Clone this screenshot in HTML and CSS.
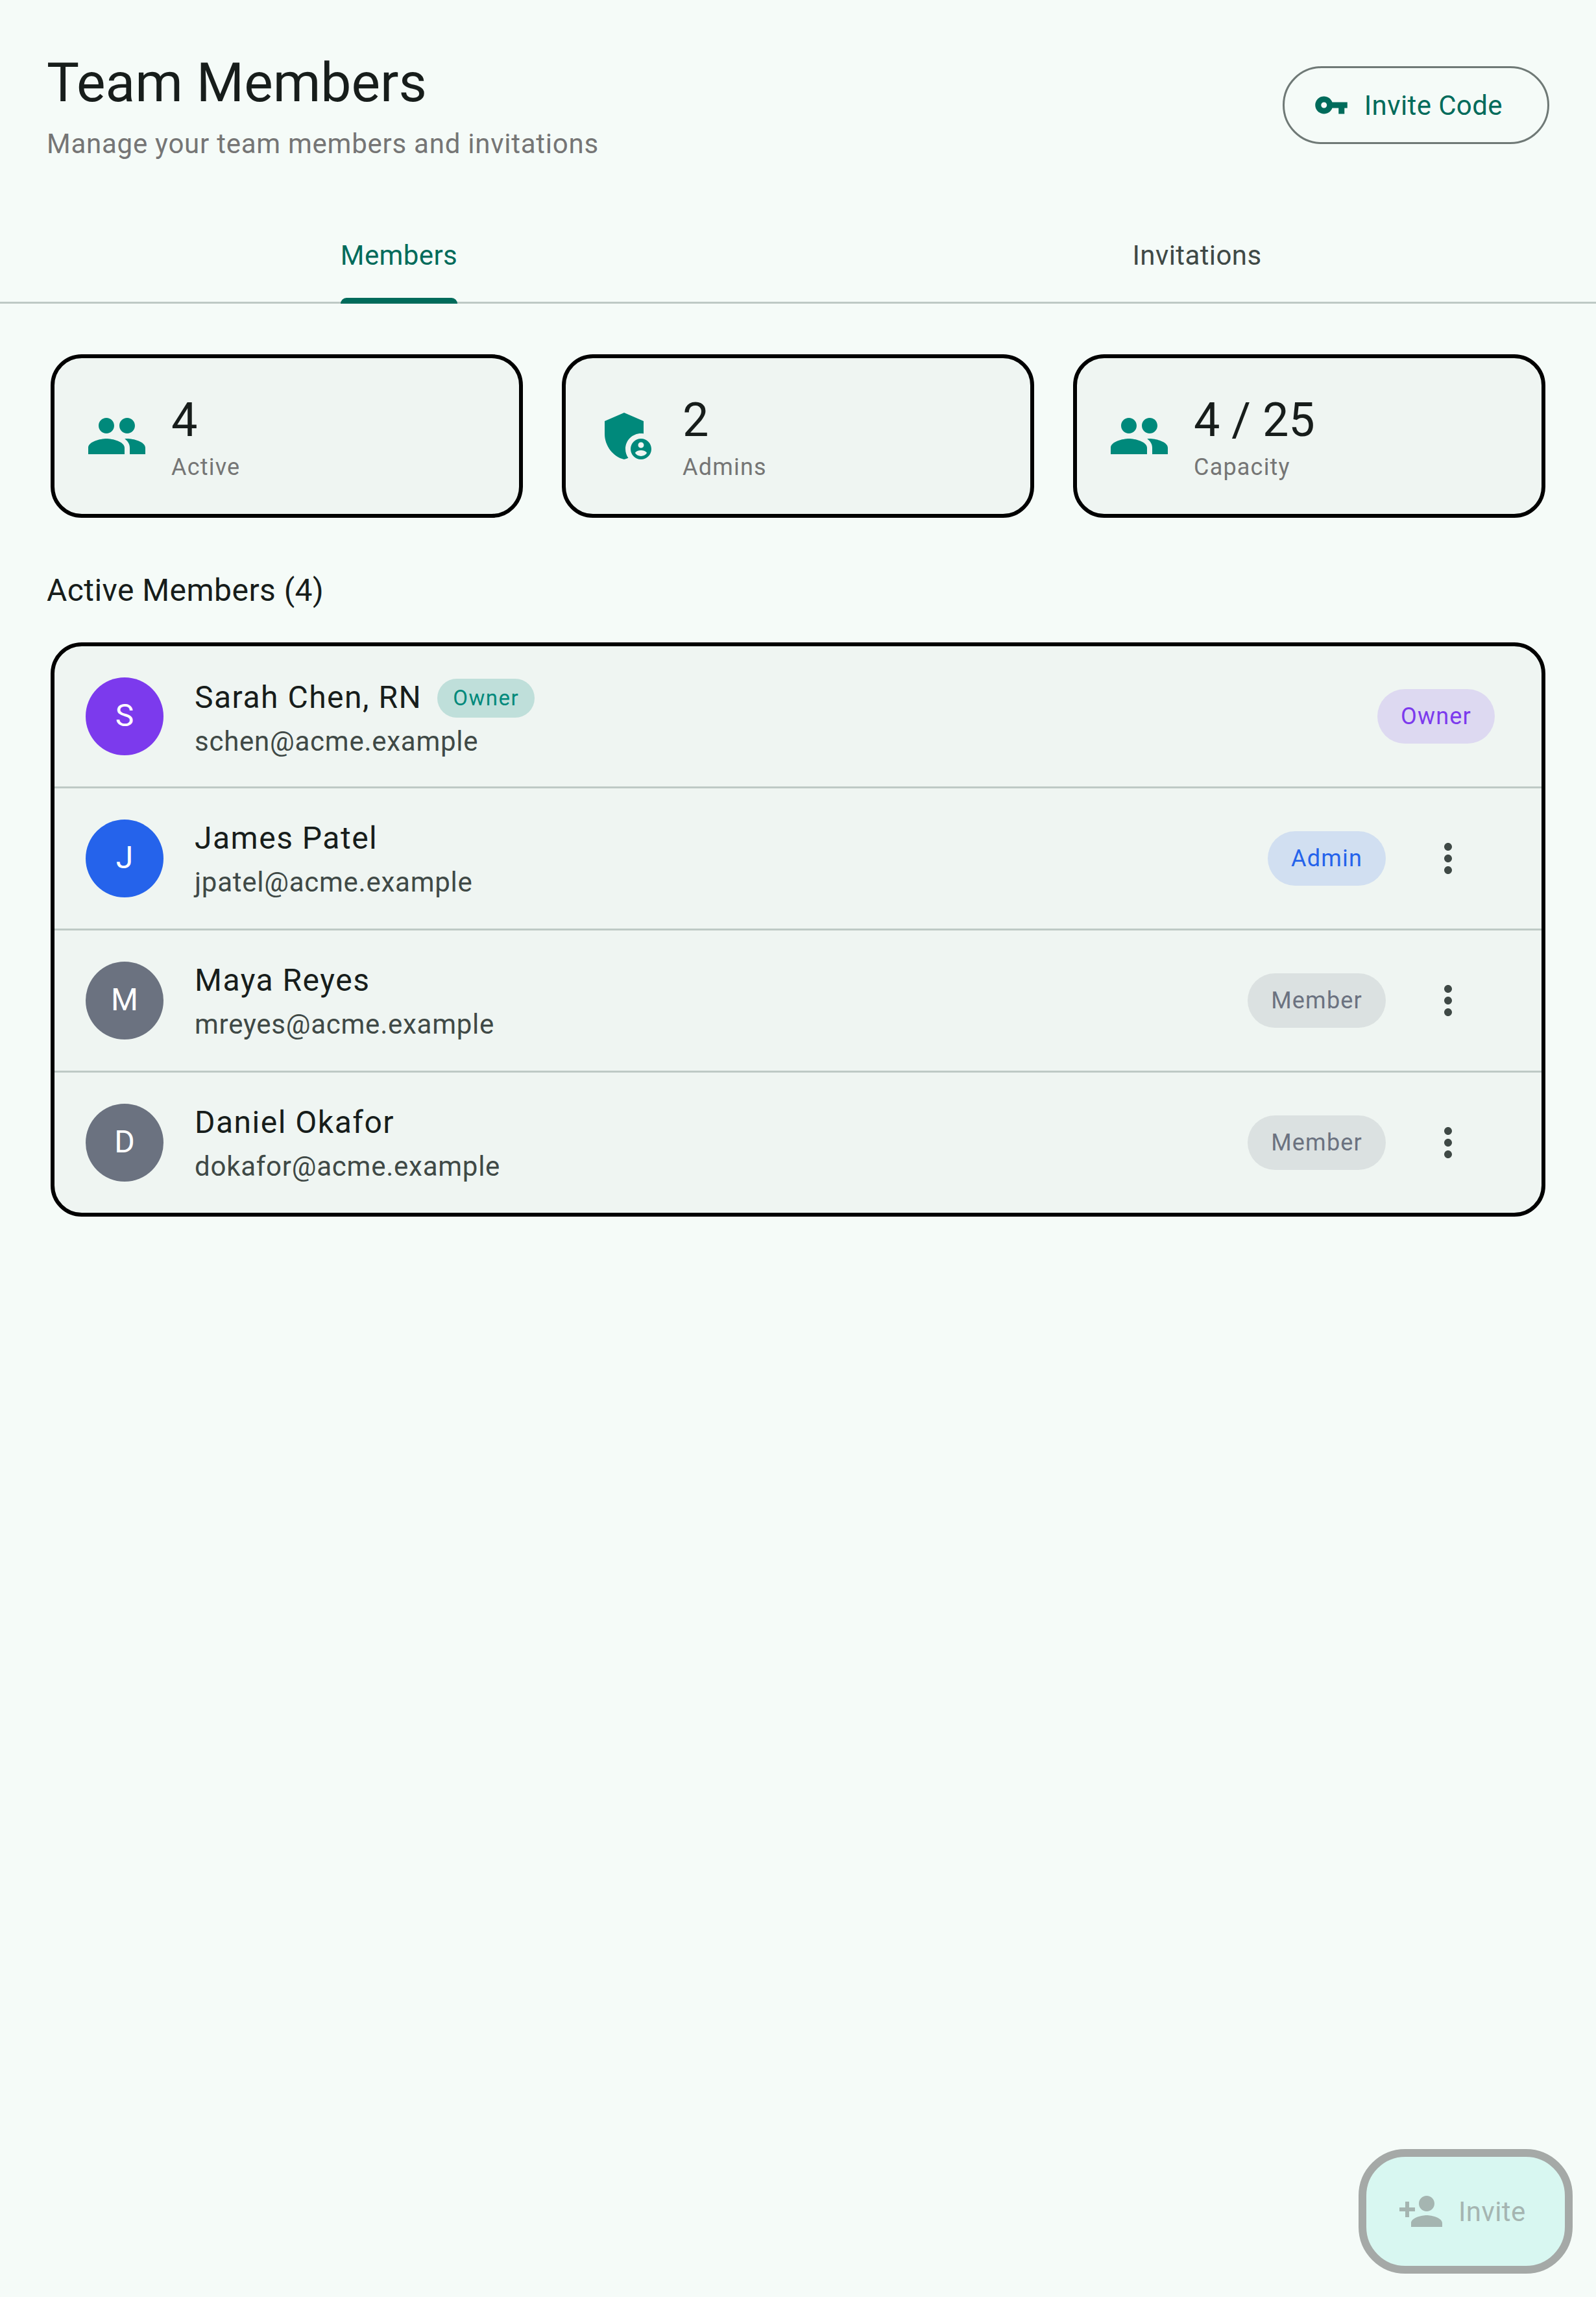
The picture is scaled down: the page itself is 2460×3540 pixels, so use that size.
FILE: index.html
```html
<!DOCTYPE html>
<html lang="en">
<head>
    <meta charset="UTF-8">
    <meta name="viewport" content="width=device-width, initial-scale=1.0">
    <title>Team Members</title>
    <link rel="stylesheet" href="styles.css">
</head>
<body>
    <div class="screen">
        <!-- Header -->
        <div class="header">
            <div>
                <h1>Team Members</h1>
                <p class="subtitle">Manage your team members and invitations</p>
            </div>
            <div class="invite-code">
                <svg class="invite-code-icon" viewBox="0 0 24 24"><path d="M12.65 10C11.83 7.67 9.61 6 7 6c-3.31 0-6 2.69-6 6s2.69 6 6 6c2.61 0 4.83-1.67 5.65-4H17v4h4v-4h2v-4H12.65zM7 14c-1.1 0-2-.9-2-2s.9-2 2-2 2 .9 2 2-.9 2-2 2z"/></svg>
                <span>Invite Code</span>
            </div>
        </div>

        <!-- Tabs -->
        <div class="tabs">
            <div class="tab active"><span class="tab-label">Members</span></div>
            <div class="tab"><span class="tab-label">Invitations</span></div>
        </div>

        <!-- Stats -->
        <div class="stats">
            <div class="stat-card">
                <svg class="stat-icon" viewBox="0 0 24 24"><path d="M16 11c1.66 0 2.99-1.34 2.99-3S17.66 5 16 5c-1.66 0-3 1.34-3 3s1.34 3 3 3zm-8 0c1.66 0 2.99-1.34 2.99-3S9.66 5 8 5C6.34 5 5 6.34 5 8s1.34 3 3 3zm0 2c-2.33 0-7 1.17-7 3.5V19h14v-2.5c0-2.33-4.67-3.5-7-3.5zm8 0c-.29 0-.62.02-.97.05 1.16.84 1.97 1.97 1.97 3.45V19h6v-2.5c0-2.33-4.67-3.5-7-3.5z"/></svg>
                <div>
                    <div class="stat-value">4</div>
                    <div class="stat-label">Active</div>
                </div>
            </div>
            <div class="stat-card">
                <svg class="stat-icon" viewBox="0 0 24 24"><path d="M17 11c.34 0 .67.04 1 .09V6.27L10.5 3 3 6.27v4.91c0 4.54 3.2 8.79 7.5 9.82.55-.13 1.08-.32 1.6-.55-.69-.98-1.1-2.17-1.1-3.45 0-3.31 2.69-6 6-6z"/><path d="M17 13c-2.21 0-4 1.79-4 4s1.79 4 4 4 4-1.79 4-4-1.79-4-4-4zm0 1.38c.62 0 1.12.51 1.12 1.12s-.51 1.12-1.12 1.12-1.12-.51-1.12-1.12.5-1.12 1.12-1.12zm0 5.37c-.93 0-1.74-.46-2.24-1.17.05-.72 1.51-1.08 2.24-1.08s2.19.36 2.24 1.08c-.5.71-1.31 1.17-2.24 1.17z"/></svg>
                <div>
                    <div class="stat-value">2</div>
                    <div class="stat-label">Admins</div>
                </div>
            </div>
            <div class="stat-card">
                <svg class="stat-icon" viewBox="0 0 24 24"><path d="M16 11c1.66 0 2.99-1.34 2.99-3S17.66 5 16 5c-1.66 0-3 1.34-3 3s1.34 3 3 3zm-8 0c1.66 0 2.99-1.34 2.99-3S9.66 5 8 5C6.34 5 5 6.34 5 8s1.34 3 3 3zm0 2c-2.33 0-7 1.17-7 3.5V19h14v-2.5c0-2.33-4.67-3.5-7-3.5zm8 0c-.29 0-.62.02-.97.05 1.16.84 1.97 1.97 1.97 3.45V19h6v-2.5c0-2.33-4.67-3.5-7-3.5z"/></svg>
                <div>
                    <div class="stat-value">4 / 25</div>
                    <div class="stat-label">Capacity</div>
                </div>
            </div>
        </div>

        <h2 class="section-title">Active Members (4)</h2>

        <!-- Member list -->
        <div class="member-list">
            <div class="member-row">
                <div class="avatar avatar-owner">S</div>
                <div class="member-info">
                    <div class="member-name with-chip">Sarah Chen, RN<span class="you-chip">Owner</span></div>
                    <div class="member-email">schen@acme.example</div>
                </div>
                <span class="role role-owner">Owner</span>
            </div>
            <div class="member-row">
                <div class="avatar avatar-admin">J</div>
                <div class="member-info">
                    <div class="member-name">James Patel</div>
                    <div class="member-email">jpatel@acme.example</div>
                </div>
                <span class="role role-admin">Admin</span>
                <div class="menu-button"><svg viewBox="0 0 24 24"><path d="M12 8c1.1 0 2-.9 2-2s-.9-2-2-2-2 .9-2 2 .9 2 2 2zm0 2c-1.1 0-2 .9-2 2s.9 2 2 2 2-.9 2-2-.9-2-2-2zm0 6c-1.1 0-2 .9-2 2s.9 2 2 2 2-.9 2-2-.9-2-2-2z"/></svg></div>
            </div>
            <div class="member-row">
                <div class="avatar avatar-member">M</div>
                <div class="member-info">
                    <div class="member-name">Maya Reyes</div>
                    <div class="member-email">mreyes@acme.example</div>
                </div>
                <span class="role role-member">Member</span>
                <div class="menu-button"><svg viewBox="0 0 24 24"><path d="M12 8c1.1 0 2-.9 2-2s-.9-2-2-2-2 .9-2 2 .9 2 2 2zm0 2c-1.1 0-2 .9-2 2s.9 2 2 2 2-.9 2-2-.9-2-2-2zm0 6c-1.1 0-2 .9-2 2s.9 2 2 2 2-.9 2-2-.9-2-2-2z"/></svg></div>
            </div>
            <div class="member-row">
                <div class="avatar avatar-member">D</div>
                <div class="member-info">
                    <div class="member-name">Daniel Okafor</div>
                    <div class="member-email">dokafor@acme.example</div>
                </div>
                <span class="role role-member">Member</span>
                <div class="menu-button"><svg viewBox="0 0 24 24"><path d="M12 8c1.1 0 2-.9 2-2s-.9-2-2-2-2 .9-2 2 .9 2 2 2zm0 2c-1.1 0-2 .9-2 2s.9 2 2 2 2-.9 2-2-.9-2-2-2zm0 6c-1.1 0-2 .9-2 2s.9 2 2 2 2-.9 2-2-.9-2-2-2z"/></svg></div>
            </div>
        </div>

        <!-- Floating invite button (disabled) -->
        <div class="fab">
            <svg class="fab-icon" viewBox="0 0 24 24"><path d="M15 12c2.21 0 4-1.79 4-4s-1.79-4-4-4-4 1.79-4 4 1.79 4 4 4zm-9-2V7H4v3H1v2h3v3h2v-3h3v-2H6zm9 4c-2.67 0-8 1.34-8 4v2h16v-2c0-2.66-5.33-4-8-4z"/></svg>
            <span>Invite</span>
        </div>
    </div>
</body>
</html>
```

FILE: styles.css
```css
* {
    box-sizing: border-box;
}

body {
    margin: 0;
    background-color: #f5fbf8;
    color: #171d1b;
    font-family: Roboto, "Liberation Sans", sans-serif;
}

.screen {
    position: relative;
    height: 3540px;
    overflow: hidden;
}

/* Header */
.header {
    display: flex;
    justify-content: space-between;
    align-items: center;
    padding: 72px 72px 72px;
}

h1 {
    margin: 0;
    font-size: 84px;
    line-height: 112px;
    font-weight: 400;
}

.subtitle {
    margin: 8px 0 0;
    font-size: 42px;
    line-height: 60px;
    letter-spacing: 0.75px;
    color: #757575;
}

.invite-code {
    display: flex;
    align-items: center;
    gap: 24px;
    height: 120px;
    padding: 0 69px 0 45px;
    border: 3px solid #6f7976;
    border-radius: 60px;
    font-size: 42px;
    letter-spacing: 0.4px;
    color: #006b5b;
}

.invite-code-icon {
    width: 54px;
    height: 54px;
    fill: #006b5b;
}

/* Tabs */
.tabs {
    display: flex;
    height: 144px;
    border-bottom: 3px solid #bec9c5;
}

.tab {
    flex: 1;
    display: flex;
    justify-content: center;
    font-size: 42px;
    letter-spacing: 0.4px;
    color: #3f4946;
}

.tab-label {
    position: relative;
    display: flex;
    align-items: center;
    padding-bottom: 2px;
}

.tab.active {
    color: #006b5b;
}

.tab.active .tab-label::after {
    content: "";
    position: absolute;
    left: 0;
    right: 0;
    bottom: -3px;
    height: 9px;
    background-color: #006b5b;
    border-radius: 9px 9px 0 0;
}

/* Stats */
.stats {
    display: grid;
    grid-template-columns: repeat(3, 1fr);
    gap: 60px;
    padding: 78px 78px 0;
}

.stat-card {
    display: flex;
    align-items: center;
    gap: 36px;
    height: 252px;
    padding: 0 48px;
    background-color: #eff5f2;
    border: 6px solid #000;
    border-radius: 48px;
}

.stat-icon {
    width: 96px;
    height: 96px;
    fill: #00897b;
    flex-shrink: 0;
}

.stat-value {
    font-size: 72px;
    line-height: 96px;
}

.stat-label {
    font-size: 36px;
    line-height: 48px;
    letter-spacing: 1.2px;
    color: #757575;
}

.section-title {
    margin: 76px 72px 44px;
    font-size: 48px;
    line-height: 72px;
    font-weight: 400;
    letter-spacing: 0.45px;
    color: #171d1b;
}

/* Member list */
.member-list {
    margin: 0 78px;
    background-color: #eff5f2;
    border: 6px solid #000;
    border-radius: 48px;
    overflow: hidden;
}

.member-row {
    display: flex;
    align-items: center;
    gap: 24px;
    height: 219px;
    padding: 0 72px 0 48px;
    border-bottom: 3px solid #bec9c5;
}

.member-row:last-child {
    height: 216px;
    border-bottom: none;
}

.avatar {
    display: flex;
    align-items: center;
    justify-content: center;
    width: 120px;
    height: 120px;
    margin-right: 24px;
    padding-bottom: 3px;
    border-radius: 50%;
    font-size: 48px;
    color: #fff;
    flex-shrink: 0;
}

.avatar-owner {
    background-color: #7c3aed;
}

.avatar-admin {
    background-color: #2563eb;
}

.avatar-member {
    background-color: #6b7280;
}

.member-info {
    flex: 1;
}

.member-name {
    display: flex;
    align-items: center;
    font-size: 48px;
    line-height: 72px;
    letter-spacing: 1.5px;
    color: #171d1b;
}

.member-name.with-chip {
    padding-top: 3px;
}

.member-email {
    margin-top: 2px;
    font-size: 42px;
    line-height: 60px;
    letter-spacing: 0.75px;
    color: #3f4946;
}

.you-chip {
    margin: 3px 0 0 24px;
    padding: 0 24px;
    height: 60px;
    line-height: 60px;
    border-radius: 30px;
    background-color: rgba(0, 137, 123, 0.2);
    color: #00897b;
    font-size: 33px;
    letter-spacing: 1.5px;
}

.role {
    height: 84px;
    line-height: 84px;
    padding: 0 36px;
    border-radius: 42px;
    font-size: 36px;
    letter-spacing: 1.2px;
}

.role-owner {
    background-color: rgba(124, 58, 237, 0.15);
    color: #7c3aed;
}

.role-admin {
    background-color: rgba(37, 99, 235, 0.15);
    color: #2563eb;
}

.role-member {
    background-color: rgba(107, 114, 128, 0.15);
    color: #6b7280;
}

.menu-button {
    display: flex;
    align-items: center;
    justify-content: center;
    width: 144px;
    height: 144px;
}

.menu-button svg {
    width: 72px;
    height: 72px;
    fill: #3f4946;
}

/* Floating button, over the page */
.fab {
    position: absolute;
    right: 36px;
    bottom: 36px;
    display: flex;
    align-items: center;
    gap: 22px;
    width: 330px;
    height: 192px;
    padding: 0 0 0 48px;
    background-color: #d8f7f1;
    border: 12px solid #a5a9a7;
    border-radius: 72px;
    font-size: 42px;
    letter-spacing: 0.4px;
    color: #a5b5b1;
}

.fab-icon {
    width: 72px;
    height: 72px;
    fill: #a5b5b1;
}
```
